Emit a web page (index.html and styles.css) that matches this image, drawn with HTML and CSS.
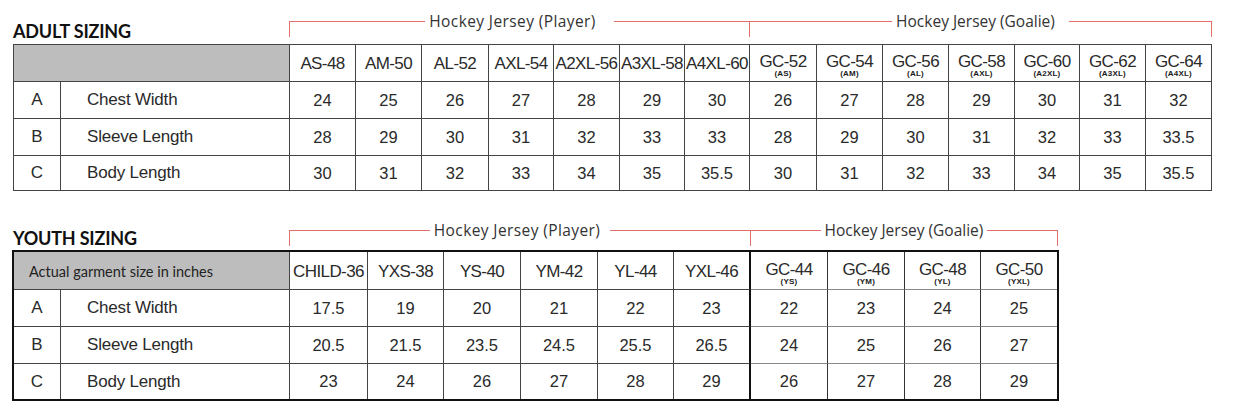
FILE: index.html
```html
<!DOCTYPE html>
<html lang="en">
<head>
<meta charset="utf-8">
<title>Hockey Jersey Sizing</title>
<link rel="stylesheet" href="styles.css">
</head>
<body>
<main class="page">
  <section class="sizing adult">
    <div class="topline">
      <h2 class="title">ADULT SIZING</h2>
      <div class="bracket player">
        <span class="seg"></span><span class="blabel spaced shift7">Hockey Jersey (Player)</span><span class="seg"></span>
      </div>
      <div class="bracket goalie end">
        <span class="seg"></span><span class="blabel shift5">Hockey Jersey (Goalie)</span><span class="seg"></span>
      </div>
    </div>
    <div class="chart">
      <div class="cell head gray span2"></div>
      <div class="cell head">AS-48</div>
      <div class="cell head">AM-50</div>
      <div class="cell head">AL-52</div>
      <div class="cell head">AXL-54</div>
      <div class="cell head">A2XL-56</div>
      <div class="cell head">A3XL-58</div>
      <div class="cell head">A4XL-60</div>
      <div class="cell head gc"><span class="main">GC-52</span><span class="sub">(AS)</span></div>
      <div class="cell head gc"><span class="main">GC-54</span><span class="sub">(AM)</span></div>
      <div class="cell head gc"><span class="main">GC-56</span><span class="sub">(AL)</span></div>
      <div class="cell head gc"><span class="main">GC-58</span><span class="sub">(AXL)</span></div>
      <div class="cell head gc"><span class="main">GC-60</span><span class="sub">(A2XL)</span></div>
      <div class="cell head gc"><span class="main">GC-62</span><span class="sub">(A3XL)</span></div>
      <div class="cell head gc last"><span class="main">GC-64</span><span class="sub">(A4XL)</span></div>

      <div class="cell key">A</div><div class="cell label">Chest Width</div>
      <div class="cell">24</div><div class="cell">25</div><div class="cell">26</div><div class="cell">27</div><div class="cell">28</div><div class="cell">29</div><div class="cell">30</div>
      <div class="cell">26</div><div class="cell">27</div><div class="cell">28</div><div class="cell">29</div><div class="cell">30</div><div class="cell">31</div><div class="cell last">32</div>

      <div class="cell key">B</div><div class="cell label">Sleeve Length</div>
      <div class="cell">28</div><div class="cell">29</div><div class="cell">30</div><div class="cell">31</div><div class="cell">32</div><div class="cell">33</div><div class="cell">33</div>
      <div class="cell">28</div><div class="cell">29</div><div class="cell">30</div><div class="cell">31</div><div class="cell">32</div><div class="cell">33</div><div class="cell last">33.5</div>

      <div class="cell key bottom">C</div><div class="cell label bottom">Body Length</div>
      <div class="cell bottom">30</div><div class="cell bottom">31</div><div class="cell bottom">32</div><div class="cell bottom">33</div><div class="cell bottom">34</div><div class="cell bottom">35</div><div class="cell bottom">35.5</div>
      <div class="cell bottom">30</div><div class="cell bottom">31</div><div class="cell bottom">32</div><div class="cell bottom">33</div><div class="cell bottom">34</div><div class="cell bottom">35</div><div class="cell bottom last">35.5</div>
    </div>
  </section>

  <section class="sizing youth">
    <div class="topline">
      <h2 class="title">YOUTH SIZING</h2>
      <div class="bracket player">
        <span class="seg"></span><span class="blabel spaced shift3">Hockey Jersey (Player)</span><span class="seg"></span>
      </div>
      <div class="bracket goalie end">
        <span class="seg"></span><span class="blabel">Hockey Jersey (Goalie)</span><span class="seg"></span>
      </div>
    </div>
    <div class="chart">
      <div class="cell head gray span2 note">Actual garment size in inches</div>
      <div class="cell head">CHILD-36</div>
      <div class="cell head">YXS-38</div>
      <div class="cell head">YS-40</div>
      <div class="cell head">YM-42</div>
      <div class="cell head">YL-44</div>
      <div class="cell head divider">YXL-46</div>
      <div class="cell head gc g"><span class="main">GC-44</span><span class="sub">(YS)</span></div>
      <div class="cell head gc g"><span class="main">GC-46</span><span class="sub">(YM)</span></div>
      <div class="cell head gc g"><span class="main">GC-48</span><span class="sub">(YL)</span></div>
      <div class="cell head gc g last"><span class="main">GC-50</span><span class="sub">(YXL)</span></div>

      <div class="cell key">A</div><div class="cell label">Chest Width</div>
      <div class="cell">17.5</div><div class="cell">19</div><div class="cell">20</div><div class="cell">21</div><div class="cell">22</div><div class="cell divider">23</div>
      <div class="cell g">22</div><div class="cell g">23</div><div class="cell g">24</div><div class="cell g last">25</div>

      <div class="cell key">B</div><div class="cell label">Sleeve Length</div>
      <div class="cell">20.5</div><div class="cell">21.5</div><div class="cell">23.5</div><div class="cell">24.5</div><div class="cell">25.5</div><div class="cell divider">26.5</div>
      <div class="cell g">24</div><div class="cell g">25</div><div class="cell g">26</div><div class="cell g last">27</div>

      <div class="cell key bottom">C</div><div class="cell label bottom">Body Length</div>
      <div class="cell bottom">23</div><div class="cell bottom">24</div><div class="cell bottom">26</div><div class="cell bottom">27</div><div class="cell bottom">28</div><div class="cell bottom divider">29</div>
      <div class="cell g bottom">26</div><div class="cell g bottom">27</div><div class="cell g bottom">28</div><div class="cell g bottom last">29</div>
    </div>
  </section>
</main>
</body>
</html>
```

FILE: styles.css
```css
* { box-sizing: border-box; }

html, body {
  margin: 0;
  padding: 0;
  background: #ffffff;
}

.page {
  padding: 21px 0 0 13px;
  font-family: "Liberation Sans", Arial, sans-serif;
  color: #222;
}

.sizing {
  display: flex;
  flex-direction: column;
}

.youth {
  margin-top: 39px;
}

/* ---------- title + red brackets ---------- */
.topline {
  display: flex;
  align-items: flex-end;
  height: 16px;
}

.title {
  width: 276px;
  flex: none;
  margin: 0;
  font-family: Lato, "Open Sans", sans-serif;
  font-weight: 700;
  font-size: 18px;
  line-height: 18px;
  color: #111;
  letter-spacing: -0.2px;
  white-space: nowrap;
}

.adult .title { margin-bottom: -3px; }
.youth .title { margin-bottom: -1px; }

.bracket {
  flex: none;
  align-self: stretch;
  display: flex;
  align-items: flex-start;
  border-left: 1px solid #e2706a;
}

.bracket.end { border-right: 1px solid #e2706a; }

.adult .player { width: 460px; }
.adult .goalie { width: 463px; }
.youth .player { width: 461px; }
.youth .goalie { width: 308px; }

.seg {
  flex: 1;
  border-top: 1px solid #e2706a;
}

.blabel {
  flex: none;
  margin-top: -9px;
  padding: 0 4px;
  line-height: 18px;
  font-family: "Open Sans", "Noto Sans", sans-serif;
  font-size: 15.5px;
  color: #333;
  white-space: nowrap;
}

.blabel.spaced { letter-spacing: 0.4px; }
.blabel.shift7 { padding-right: 18px; }
.blabel.shift5 { padding-right: 14px; }
.blabel.shift3 { padding-right: 10px; }

/* ---------- chart grid ---------- */
.chart {
  display: grid;
  border: 1px solid #444;
}

.adult .chart {
  margin-top: 7px;
  width: 1199px;
  grid-template-columns: 47px 229px 66px 66px 67px 65px 66px 65px 65px 67px 66px 66px 66px 65px 66px 65px;
  grid-template-rows: 37px 37px 37px 34px;
}

.youth .chart {
  margin-top: 4px;
  margin-left: -1px;
  width: 1047px;
  border: 2px solid #111;
  grid-template-columns: 47px 229px 78px 76px 77px 77px 76px 77px 77px 77px 76px 76px;
  grid-template-rows: 38px 37px 37px 35px;
}

.cell {
  display: flex;
  align-items: center;
  justify-content: center;
  border-right: 1px solid #444;
  border-bottom: 1px solid #444;
  font-size: 16.5px;
  color: #2a2a2a;
  white-space: nowrap;
}

.cell.last { border-right: none; }
.cell.bottom { border-bottom: none; }

.cell.divider { border-right: 2px solid #111; }
.cell.g { border-bottom-color: #8a8a8a; border-right-color: #333; }
.cell.g.bottom { border-bottom: none; }

.head {
  font-size: 17px;
  letter-spacing: -0.6px;
  padding-top: 2px;
}

.gray {
  background: #bdbdbd;
  border-right-color: #444;
}

.span2 { grid-column: span 2; }

.note {
  justify-content: flex-start;
  padding: 2px 0 0 15px;
  font-family: Lato, "Open Sans", sans-serif;
  font-size: 14.5px;
  letter-spacing: 0;
  color: #222;
}

.key { font-size: 17px; }

.label {
  justify-content: flex-start;
  padding-left: 26px;
  font-size: 17px;
  letter-spacing: -0.2px;
}

.gc {
  flex-direction: column;
  padding-top: 5px;
}

.gc .main { line-height: 15px; }

.gc .sub {
  margin-top: 1px;
  font-size: 8px;
  font-weight: 700;
  line-height: 7px;
  letter-spacing: 0.2px;
  color: #1a1a1a;
}
```
